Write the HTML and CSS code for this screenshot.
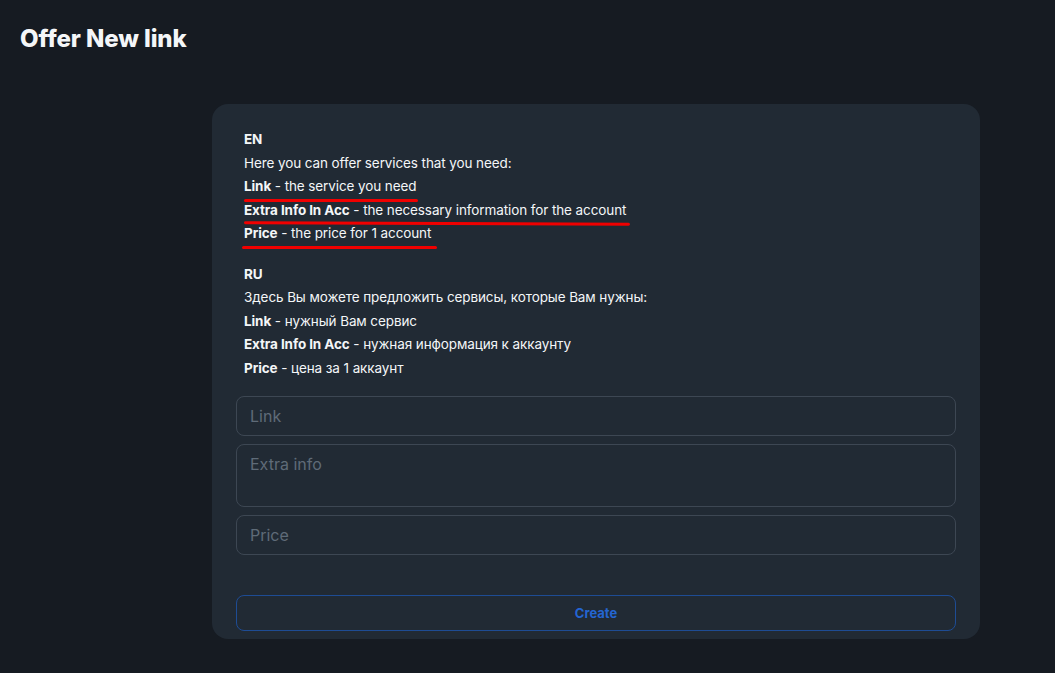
FILE: index.html
```html
<!DOCTYPE html>
<html lang="en">
<head>
    <meta charset="UTF-8">
    <meta name="viewport" content="width=device-width, initial-scale=1.0">
    <title>Offer New link</title>
    <link rel="stylesheet" href="styles.css">
</head>
<body>
    <div class="page">
        <h1 class="page-title">Offer New link</h1>

        <div class="card">
            <div class="info">
                <div class="info-block">
                    <div class="lang">EN</div>
                    <div class="line">Here you can offer services that you need:</div>
                    <div class="line"><span class="marked marked-1"><b>Link</b> - the service you need</span></div>
                    <div class="line"><span class="marked marked-2"><b>Extra Info In Acc</b> - the necessary information for the account</span></div>
                    <div class="line"><span class="marked marked-3"><b>Price</b> - the price for 1 account</span></div>
                </div>
                <div class="info-block">
                    <div class="lang">RU</div>
                    <div class="line">Здесь Вы можете предложить сервисы, которые Вам нужны:</div>
                    <div class="line"><b>Link</b> - нужный Вам сервис</div>
                    <div class="line"><b>Extra Info In Acc</b> - нужная информация к аккаунту</div>
                    <div class="line"><b>Price</b> - цена за 1 аккаунт</div>
                </div>
            </div>

            <form class="offer-form" onsubmit="return false">
                <input type="text" class="field" placeholder="Link">
                <textarea class="field field-area" placeholder="Extra info"></textarea>
                <input type="text" class="field" placeholder="Price">
                <button type="submit" class="create-btn">Create</button>
            </form>
        </div>
    </div>
</body>
</html>
```

FILE: styles.css
```css
:root {
    --bg: #161b22;
    --card-bg: #212a34;
    --text: #f4f6f8;
    --muted: #5f6b78;
    --border: #3d4753;
    --accent: #2465d1;
    --accent-border: #1e4c94;
    --mark: #f00000;
}

* {
    box-sizing: border-box;
    margin: 0;
    padding: 0;
}

body {
    font-family: Inter, 'Noto Sans', sans-serif;
    background-color: var(--bg);
    color: var(--text);
    min-height: 100vh;
}

.page {
    padding: 24px 20px;
}

.page-title {
    font-size: 24px;
    line-height: 30px;
    font-weight: 800;
    letter-spacing: -0.1px;
}

.card {
    background-color: var(--card-bg);
    border-radius: 16px;
    width: 768px;
    margin: 50px 0 0 192px;
    padding: 24px 24px 8px;
}

.info {
    padding: 0 8px;
    display: flex;
    flex-direction: column;
    gap: 17px;
    font-size: 13.5px;
    line-height: 23.5px;
    letter-spacing: -0.1px;
}

.lang,
.line b {
    font-weight: 700;
}

.marked {
    position: relative;
    display: inline-block;
}

.marked::after {
    content: '';
    position: absolute;
    left: 0;
    right: -2px;
    bottom: -3px;
    height: 3px;
    border-radius: 2px;
    background-color: var(--mark);
}

.marked-2::after {
    right: -4px;
    transform: rotate(0.25deg);
}

.marked-3::after {
    left: -2px;
    right: -6px;
}

.offer-form {
    margin-top: 16px;
    display: flex;
    flex-direction: column;
    gap: 8px;
}

.field {
    width: 100%;
    height: 40px;
    background-color: transparent;
    border: 1px solid var(--border);
    border-radius: 8px;
    padding: 8px 13px;
    font-family: inherit;
    font-size: 16px;
    color: var(--text);
    outline: none;
}

.field::placeholder {
    color: var(--muted);
}

.field-area {
    height: 63px;
    resize: none;
    line-height: 24px;
    padding-top: 7px;
}

.create-btn {
    margin-top: 32px;
    height: 36px;
    width: 100%;
    background-color: transparent;
    border: 1px solid var(--accent-border);
    border-radius: 8px;
    color: var(--accent);
    font-family: inherit;
    font-size: 13px;
    font-weight: 700;
    cursor: pointer;
}
```
